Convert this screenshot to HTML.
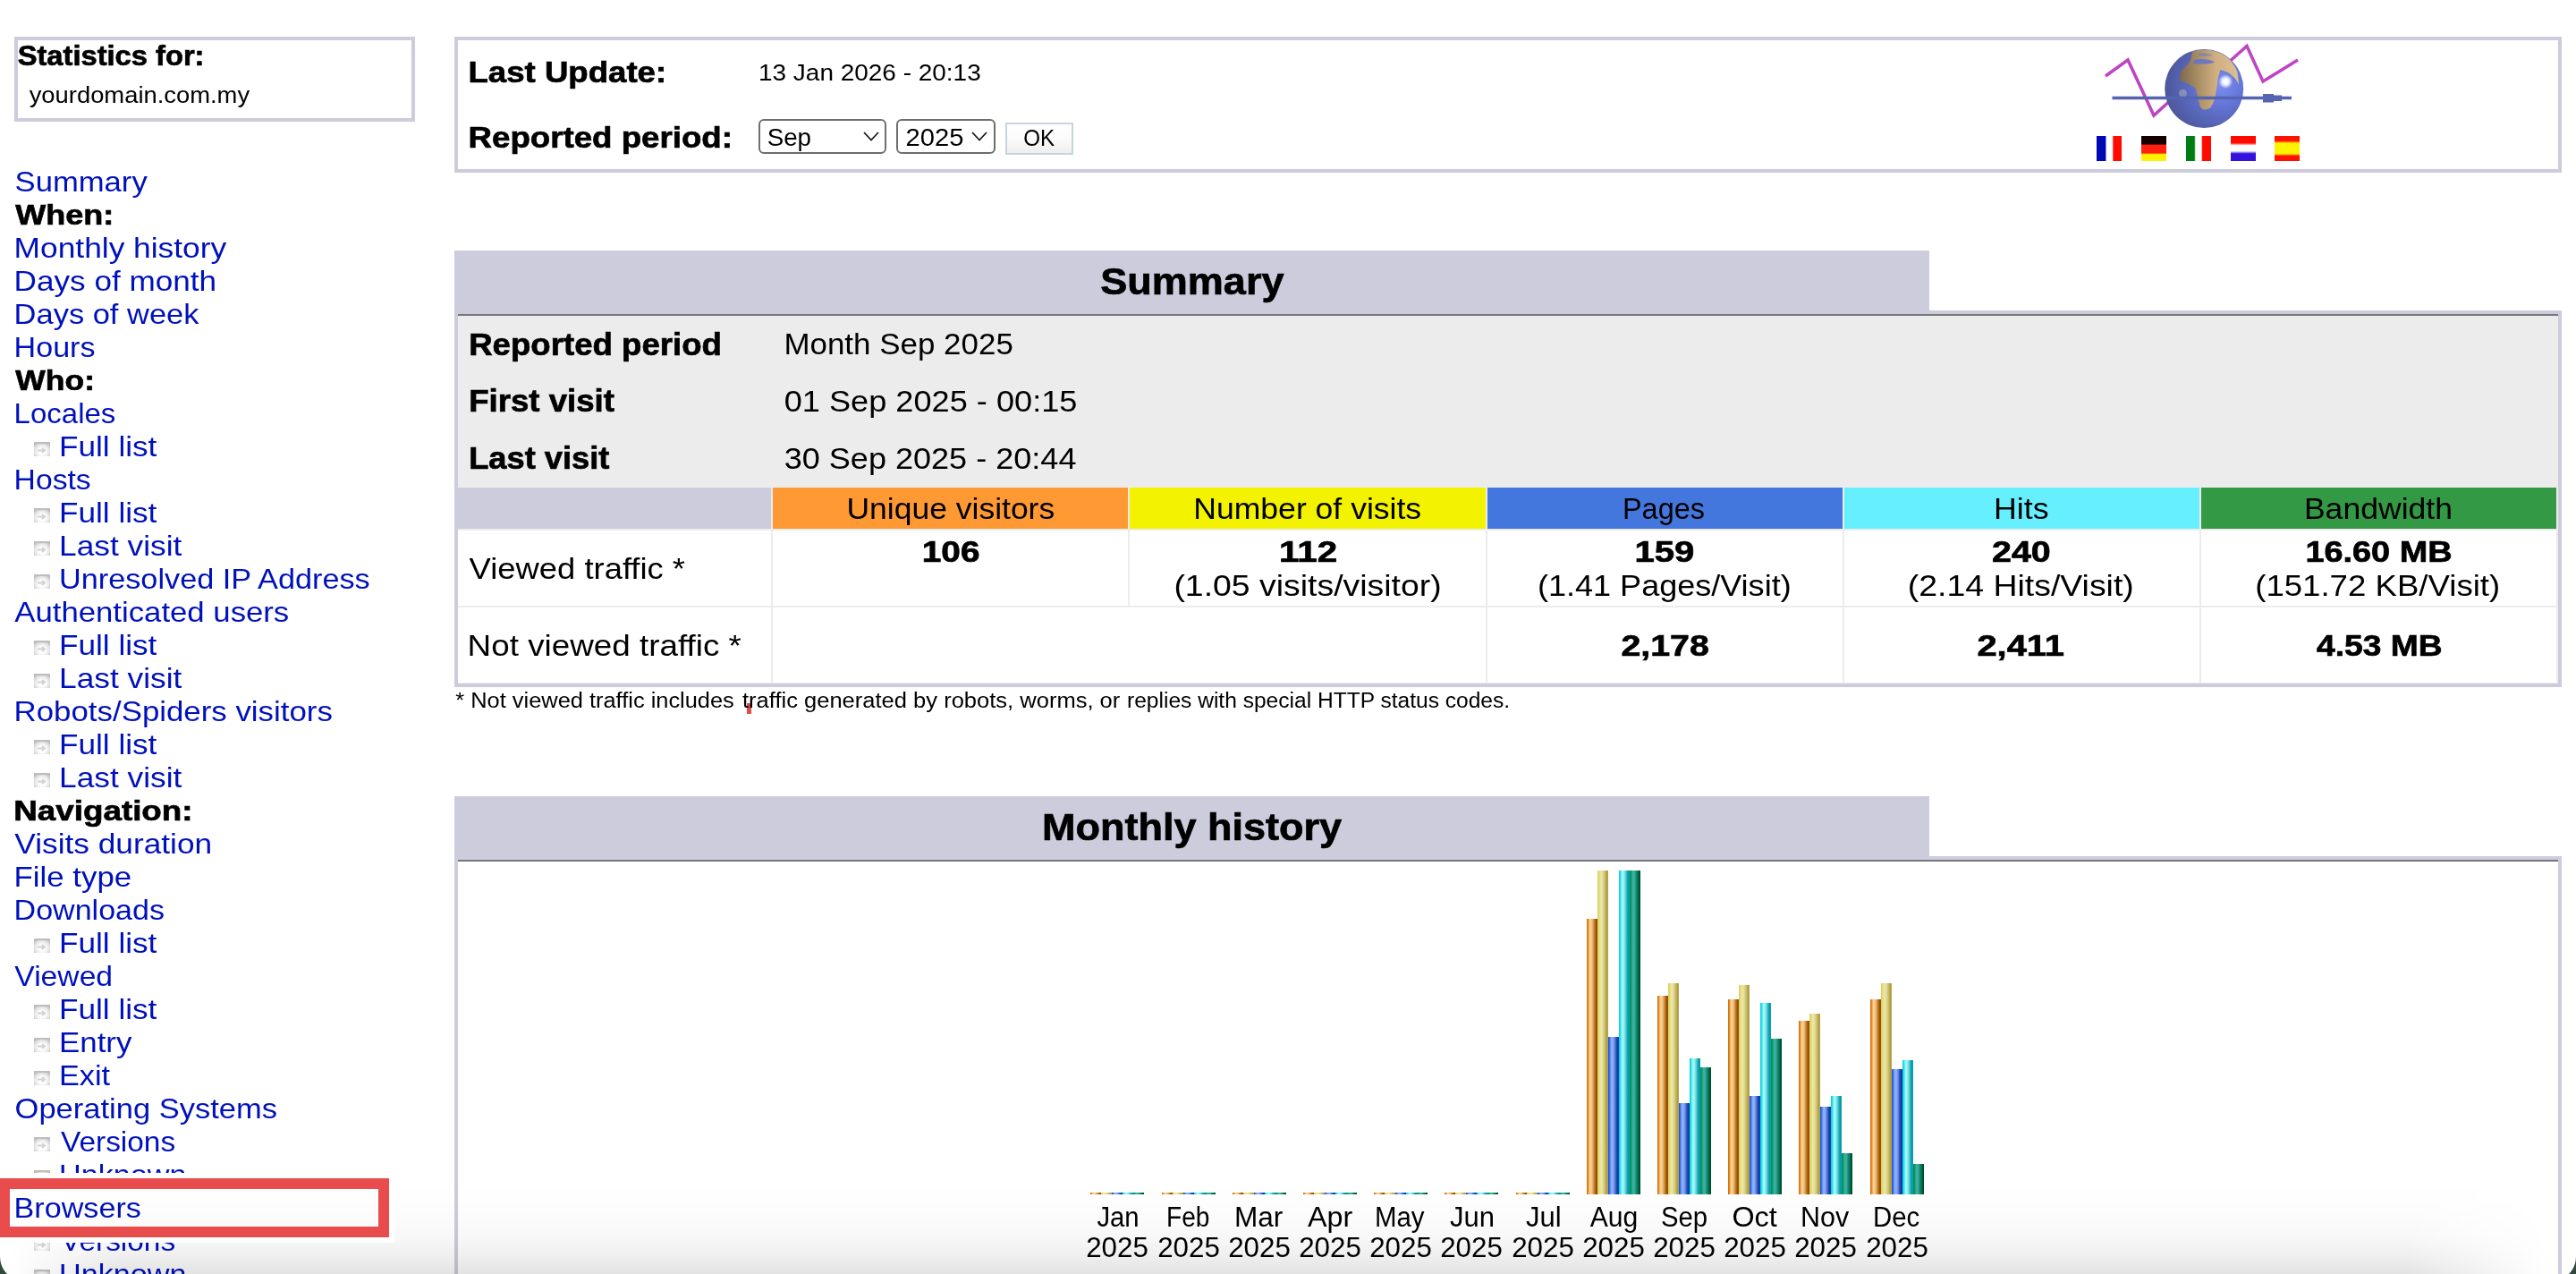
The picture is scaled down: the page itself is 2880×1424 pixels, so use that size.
<!DOCTYPE html>
<html><head><meta charset="utf-8"><title>Statistics for yourdomain.com.my</title>
<style>
html,body{margin:0;padding:0;}
body{width:2880px;height:1424px;overflow:hidden;position:relative;background:#fff;font-family:"Liberation Sans",sans-serif;}
div{box-sizing:border-box;}
.bar{position:absolute;width:12px;}
.hu{background:linear-gradient(90deg,#c86600 0%,#e99a3a 16%,#ffcb88 26%,#f6d095 40%,#dfa862 58%,#b66e14 76%,#9a5000 88%,#9a5000 100%);}
.vv{background:linear-gradient(90deg,#d6ce5c 0%,#e2dc80 16%,#eee6a0 30%,#e8e0a0 44%,#d6d088 58%,#c2b452 76%,#b09a48 88%,#c4aa50 100%);}
.vp{background:linear-gradient(90deg,#0a48d8 0%,#4a80ec 16%,#88b0fc 30%,#90aef4 44%,#6484dc 60%,#2c4cc0 76%,#0840a4 88%,#0a44a0 100%);}
.vh{background:linear-gradient(90deg,#0cc6d2 0%,#3ce4ec 16%,#90fcfc 28%,#a4f4f4 42%,#66d4dc 60%,#20aab8 76%,#0898a4 88%,#0aa8b4 100%);}
.vk{background:linear-gradient(90deg,#008650 0%,#10a070 16%,#34b4a2 30%,#40a898 46%,#14867a 62%,#007a50 76%,#005634 88%,#004c2c 100%);}
</style></head><body>

<div style="position:absolute;left:16px;top:41px;width:448px;height:95px;background:#fff;border:4px solid #ccccdd"></div>
<div style="position:absolute;left:508px;top:41px;width:2356px;height:152px;background:#fff;border:4px solid #ccccdd"></div>
<div style="position:absolute;left:848px;top:133px;width:143px;height:39px;background:#fff;border:2px solid #6e6e6e;border-radius:6px"></div>
<div style="position:absolute;left:1002px;top:133px;width:111px;height:39px;background:#fff;border:2px solid #6e6e6e;border-radius:6px"></div>
<div style="position:absolute;left:1124px;top:137px;width:76px;height:36px;background:linear-gradient(#ffffff,#fbfbfb 50%,#eeeeee);border:2px solid #c6d4e0"></div>
<div style="position:absolute;left:508px;top:280px;width:1649px;height:71px;background:#ccccdd;"></div>
<div style="position:absolute;left:2157px;top:347px;width:707px;height:4px;background:#ccccdd;"></div>
<div style="position:absolute;left:508px;top:351px;width:2356px;height:417px;background:#ccccdd;"></div>
<div style="position:absolute;left:512px;top:351px;width:2348px;height:2px;background:#777777;"></div>
<div style="position:absolute;left:512px;top:353px;width:2348px;height:192px;background:#ececec;"></div>
<div style="position:absolute;left:512px;top:545px;width:2348px;height:48px;background:#ececec;"></div>
<div style="position:absolute;left:512px;top:545px;width:350px;height:46px;background:#ccccdd;"></div>
<div style="position:absolute;left:864px;top:545px;width:397px;height:46px;background:#ff9933;"></div>
<div style="position:absolute;left:1263px;top:545px;width:398px;height:46px;background:#f3f300;"></div>
<div style="position:absolute;left:1663px;top:545px;width:397px;height:46px;background:#4477dd;"></div>
<div style="position:absolute;left:2062px;top:545px;width:397px;height:46px;background:#66f0ff;"></div>
<div style="position:absolute;left:2461px;top:545px;width:397px;height:46px;background:#339944;"></div>
<div style="position:absolute;left:512px;top:593px;width:2348px;height:171px;background:#ececec;"></div>
<div style="position:absolute;left:512px;top:593px;width:350px;height:84px;background:#fff;"></div>
<div style="position:absolute;left:864px;top:593px;width:397px;height:84px;background:#fff;"></div>
<div style="position:absolute;left:1263px;top:593px;width:398px;height:84px;background:#fff;"></div>
<div style="position:absolute;left:1663px;top:593px;width:397px;height:84px;background:#fff;"></div>
<div style="position:absolute;left:2062px;top:593px;width:397px;height:84px;background:#fff;"></div>
<div style="position:absolute;left:2461px;top:593px;width:397px;height:84px;background:#fff;"></div>
<div style="position:absolute;left:512px;top:679px;width:350px;height:84px;background:#fff;"></div>
<div style="position:absolute;left:864px;top:679px;width:797px;height:84px;background:#fff;"></div>
<div style="position:absolute;left:1663px;top:679px;width:397px;height:84px;background:#fff;"></div>
<div style="position:absolute;left:2062px;top:679px;width:397px;height:84px;background:#fff;"></div>
<div style="position:absolute;left:2461px;top:679px;width:397px;height:84px;background:#fff;"></div>
<div style="position:absolute;left:835px;top:786px;width:5px;height:12px;background:#e84a4c;"></div>
<div style="position:absolute;left:508px;top:890px;width:1649px;height:71px;background:#ccccdd;"></div>
<div style="position:absolute;left:2157px;top:957px;width:707px;height:4px;background:#ccccdd;"></div>
<div style="position:absolute;left:508px;top:961px;width:2356px;height:479px;background:#ccccdd;"></div>
<div style="position:absolute;left:512px;top:961px;width:2348px;height:2px;background:#777777;"></div>
<div style="position:absolute;left:512px;top:963px;width:2348px;height:477px;background:#fff;"></div>
<div class="bar hu" style="left:1219px;top:1333px;height:2px"></div>
<div class="bar vv" style="left:1231px;top:1333px;height:2px"></div>
<div class="bar vp" style="left:1243px;top:1333px;height:2px"></div>
<div class="bar vh" style="left:1255px;top:1333px;height:2px"></div>
<div class="bar vk" style="left:1267px;top:1333px;height:2px"></div>
<div class="bar hu" style="left:1299px;top:1333px;height:2px"></div>
<div class="bar vv" style="left:1311px;top:1333px;height:2px"></div>
<div class="bar vp" style="left:1323px;top:1333px;height:2px"></div>
<div class="bar vh" style="left:1335px;top:1333px;height:2px"></div>
<div class="bar vk" style="left:1347px;top:1333px;height:2px"></div>
<div class="bar hu" style="left:1378px;top:1333px;height:2px"></div>
<div class="bar vv" style="left:1390px;top:1333px;height:2px"></div>
<div class="bar vp" style="left:1402px;top:1333px;height:2px"></div>
<div class="bar vh" style="left:1414px;top:1333px;height:2px"></div>
<div class="bar vk" style="left:1426px;top:1333px;height:2px"></div>
<div class="bar hu" style="left:1457px;top:1333px;height:2px"></div>
<div class="bar vv" style="left:1469px;top:1333px;height:2px"></div>
<div class="bar vp" style="left:1481px;top:1333px;height:2px"></div>
<div class="bar vh" style="left:1493px;top:1333px;height:2px"></div>
<div class="bar vk" style="left:1505px;top:1333px;height:2px"></div>
<div class="bar hu" style="left:1536px;top:1333px;height:2px"></div>
<div class="bar vv" style="left:1548px;top:1333px;height:2px"></div>
<div class="bar vp" style="left:1560px;top:1333px;height:2px"></div>
<div class="bar vh" style="left:1572px;top:1333px;height:2px"></div>
<div class="bar vk" style="left:1584px;top:1333px;height:2px"></div>
<div class="bar hu" style="left:1615px;top:1333px;height:2px"></div>
<div class="bar vv" style="left:1627px;top:1333px;height:2px"></div>
<div class="bar vp" style="left:1639px;top:1333px;height:2px"></div>
<div class="bar vh" style="left:1651px;top:1333px;height:2px"></div>
<div class="bar vk" style="left:1663px;top:1333px;height:2px"></div>
<div class="bar hu" style="left:1695px;top:1333px;height:2px"></div>
<div class="bar vv" style="left:1707px;top:1333px;height:2px"></div>
<div class="bar vp" style="left:1719px;top:1333px;height:2px"></div>
<div class="bar vh" style="left:1731px;top:1333px;height:2px"></div>
<div class="bar vk" style="left:1743px;top:1333px;height:2px"></div>
<div class="bar hu" style="left:1774px;top:1027px;height:308px"></div>
<div class="bar vv" style="left:1786px;top:973px;height:362px"></div>
<div class="bar vp" style="left:1798px;top:1159px;height:176px"></div>
<div class="bar vh" style="left:1810px;top:973px;height:362px"></div>
<div class="bar vk" style="left:1822px;top:973px;height:362px"></div>
<div class="bar hu" style="left:1853px;top:1113px;height:222px"></div>
<div class="bar vv" style="left:1865px;top:1099px;height:236px"></div>
<div class="bar vp" style="left:1877px;top:1233px;height:102px"></div>
<div class="bar vh" style="left:1889px;top:1183px;height:152px"></div>
<div class="bar vk" style="left:1901px;top:1193px;height:142px"></div>
<div class="bar hu" style="left:1932px;top:1117px;height:218px"></div>
<div class="bar vv" style="left:1944px;top:1101px;height:234px"></div>
<div class="bar vp" style="left:1956px;top:1225px;height:110px"></div>
<div class="bar vh" style="left:1968px;top:1121px;height:214px"></div>
<div class="bar vk" style="left:1980px;top:1161px;height:174px"></div>
<div class="bar hu" style="left:2011px;top:1141px;height:194px"></div>
<div class="bar vv" style="left:2023px;top:1133px;height:202px"></div>
<div class="bar vp" style="left:2035px;top:1237px;height:98px"></div>
<div class="bar vh" style="left:2047px;top:1225px;height:110px"></div>
<div class="bar vk" style="left:2059px;top:1289px;height:46px"></div>
<div class="bar hu" style="left:2091px;top:1117px;height:218px"></div>
<div class="bar vv" style="left:2103px;top:1099px;height:236px"></div>
<div class="bar vp" style="left:2115px;top:1195px;height:140px"></div>
<div class="bar vh" style="left:2127px;top:1185px;height:150px"></div>
<div class="bar vk" style="left:2139px;top:1301px;height:34px"></div>
<div style="position:absolute;left:38px;top:494px;width:18px;height:16px;background:radial-gradient(ellipse at 50% 60%,#ffffff 30%,#e4e4e4 65%,#b0b0b0 100%);border-top:2px solid #bdbdbd"><svg width="18" height="14" style="position:absolute;left:0;top:0"><path d="M4,7.5 H10 M9,5 L12,7.5 L9,10" fill="none" stroke="#d2d2d2" stroke-width="2"/></svg></div>
<div style="position:absolute;left:38px;top:568px;width:18px;height:16px;background:radial-gradient(ellipse at 50% 60%,#ffffff 30%,#e4e4e4 65%,#b0b0b0 100%);border-top:2px solid #bdbdbd"><svg width="18" height="14" style="position:absolute;left:0;top:0"><path d="M4,7.5 H10 M9,5 L12,7.5 L9,10" fill="none" stroke="#d2d2d2" stroke-width="2"/></svg></div>
<div style="position:absolute;left:38px;top:605px;width:18px;height:16px;background:radial-gradient(ellipse at 50% 60%,#ffffff 30%,#e4e4e4 65%,#b0b0b0 100%);border-top:2px solid #bdbdbd"><svg width="18" height="14" style="position:absolute;left:0;top:0"><path d="M4,7.5 H10 M9,5 L12,7.5 L9,10" fill="none" stroke="#d2d2d2" stroke-width="2"/></svg></div>
<div style="position:absolute;left:38px;top:642px;width:18px;height:16px;background:radial-gradient(ellipse at 50% 60%,#ffffff 30%,#e4e4e4 65%,#b0b0b0 100%);border-top:2px solid #bdbdbd"><svg width="18" height="14" style="position:absolute;left:0;top:0"><path d="M4,7.5 H10 M9,5 L12,7.5 L9,10" fill="none" stroke="#d2d2d2" stroke-width="2"/></svg></div>
<div style="position:absolute;left:38px;top:716px;width:18px;height:16px;background:radial-gradient(ellipse at 50% 60%,#ffffff 30%,#e4e4e4 65%,#b0b0b0 100%);border-top:2px solid #bdbdbd"><svg width="18" height="14" style="position:absolute;left:0;top:0"><path d="M4,7.5 H10 M9,5 L12,7.5 L9,10" fill="none" stroke="#d2d2d2" stroke-width="2"/></svg></div>
<div style="position:absolute;left:38px;top:753px;width:18px;height:16px;background:radial-gradient(ellipse at 50% 60%,#ffffff 30%,#e4e4e4 65%,#b0b0b0 100%);border-top:2px solid #bdbdbd"><svg width="18" height="14" style="position:absolute;left:0;top:0"><path d="M4,7.5 H10 M9,5 L12,7.5 L9,10" fill="none" stroke="#d2d2d2" stroke-width="2"/></svg></div>
<div style="position:absolute;left:38px;top:827px;width:18px;height:16px;background:radial-gradient(ellipse at 50% 60%,#ffffff 30%,#e4e4e4 65%,#b0b0b0 100%);border-top:2px solid #bdbdbd"><svg width="18" height="14" style="position:absolute;left:0;top:0"><path d="M4,7.5 H10 M9,5 L12,7.5 L9,10" fill="none" stroke="#d2d2d2" stroke-width="2"/></svg></div>
<div style="position:absolute;left:38px;top:864px;width:18px;height:16px;background:radial-gradient(ellipse at 50% 60%,#ffffff 30%,#e4e4e4 65%,#b0b0b0 100%);border-top:2px solid #bdbdbd"><svg width="18" height="14" style="position:absolute;left:0;top:0"><path d="M4,7.5 H10 M9,5 L12,7.5 L9,10" fill="none" stroke="#d2d2d2" stroke-width="2"/></svg></div>
<div style="position:absolute;left:38px;top:1049px;width:18px;height:16px;background:radial-gradient(ellipse at 50% 60%,#ffffff 30%,#e4e4e4 65%,#b0b0b0 100%);border-top:2px solid #bdbdbd"><svg width="18" height="14" style="position:absolute;left:0;top:0"><path d="M4,7.5 H10 M9,5 L12,7.5 L9,10" fill="none" stroke="#d2d2d2" stroke-width="2"/></svg></div>
<div style="position:absolute;left:38px;top:1123px;width:18px;height:16px;background:radial-gradient(ellipse at 50% 60%,#ffffff 30%,#e4e4e4 65%,#b0b0b0 100%);border-top:2px solid #bdbdbd"><svg width="18" height="14" style="position:absolute;left:0;top:0"><path d="M4,7.5 H10 M9,5 L12,7.5 L9,10" fill="none" stroke="#d2d2d2" stroke-width="2"/></svg></div>
<div style="position:absolute;left:38px;top:1160px;width:18px;height:16px;background:radial-gradient(ellipse at 50% 60%,#ffffff 30%,#e4e4e4 65%,#b0b0b0 100%);border-top:2px solid #bdbdbd"><svg width="18" height="14" style="position:absolute;left:0;top:0"><path d="M4,7.5 H10 M9,5 L12,7.5 L9,10" fill="none" stroke="#d2d2d2" stroke-width="2"/></svg></div>
<div style="position:absolute;left:38px;top:1197px;width:18px;height:16px;background:radial-gradient(ellipse at 50% 60%,#ffffff 30%,#e4e4e4 65%,#b0b0b0 100%);border-top:2px solid #bdbdbd"><svg width="18" height="14" style="position:absolute;left:0;top:0"><path d="M4,7.5 H10 M9,5 L12,7.5 L9,10" fill="none" stroke="#d2d2d2" stroke-width="2"/></svg></div>
<div style="position:absolute;left:38px;top:1271px;width:18px;height:16px;background:radial-gradient(ellipse at 50% 60%,#ffffff 30%,#e4e4e4 65%,#b0b0b0 100%);border-top:2px solid #bdbdbd"><svg width="18" height="14" style="position:absolute;left:0;top:0"><path d="M4,7.5 H10 M9,5 L12,7.5 L9,10" fill="none" stroke="#d2d2d2" stroke-width="2"/></svg></div>
<div style="position:absolute;left:38px;top:1308px;width:18px;height:16px;background:radial-gradient(ellipse at 50% 60%,#ffffff 30%,#e4e4e4 65%,#b0b0b0 100%);border-top:2px solid #bdbdbd"><svg width="18" height="14" style="position:absolute;left:0;top:0"><path d="M4,7.5 H10 M9,5 L12,7.5 L9,10" fill="none" stroke="#d2d2d2" stroke-width="2"/></svg></div>
<div style="position:absolute;left:38px;top:1382px;width:18px;height:16px;background:radial-gradient(ellipse at 50% 60%,#ffffff 30%,#e4e4e4 65%,#b0b0b0 100%);border-top:2px solid #bdbdbd"><svg width="18" height="14" style="position:absolute;left:0;top:0"><path d="M4,7.5 H10 M9,5 L12,7.5 L9,10" fill="none" stroke="#d2d2d2" stroke-width="2"/></svg></div>
<div style="position:absolute;left:38px;top:1419px;width:18px;height:16px;background:radial-gradient(ellipse at 50% 60%,#ffffff 30%,#e4e4e4 65%,#b0b0b0 100%);border-top:2px solid #bdbdbd"><svg width="18" height="14" style="position:absolute;left:0;top:0"><path d="M4,7.5 H10 M9,5 L12,7.5 L9,10" fill="none" stroke="#d2d2d2" stroke-width="2"/></svg></div>
<div style="position:absolute;left:2344px;top:152px;width:28px;height:28px;background:linear-gradient(90deg,#0008b4 0,#0008b4 9.6px,#ffffff 11.2px,#ffffff 17.4px,#ff0a00 19px,#ff0a00 28px)"></div><div style="position:absolute;left:2394px;top:152px;width:28px;height:28px;background:linear-gradient(180deg,#140000 0,#140000 8.8px,#ff2010 10.4px,#ff2010 19px,#fff200 20.6px,#fff200 28px)"></div><div style="position:absolute;left:2444px;top:152px;width:28px;height:28px;background:linear-gradient(90deg,#007c10 0,#007c10 9.2px,#ffffff 10.8px,#ffffff 17px,#ff0a00 18.6px,#ff0a00 28px)"></div><div style="position:absolute;left:2494px;top:152px;width:28px;height:28px;background:linear-gradient(180deg,#ff0a00 0,#ff0a00 7.8px,#ffffff 10.6px,#ffffff 16.8px,#3610dc 19.8px,#3610dc 28px)"></div><div style="position:absolute;left:2543px;top:152px;width:28px;height:28px;background:linear-gradient(180deg,#ff1000 0,#ff1000 5.4px,#fff200 8px,#fff200 19.8px,#ff1000 22.4px,#ff1000 28px)"></div>
<svg width="2880" height="1424" style="position:absolute;left:0;top:0;will-change:transform;font-family:'Liberation Sans',sans-serif"><text x="19.70" y="73.20" font-size="31" font-weight="bold" fill="#000" stroke="#000" stroke-width="0.7" textLength="208.81" lengthAdjust="spacingAndGlyphs">Statistics for:</text><text x="32.70" y="114.50" font-size="25" font-weight="normal" fill="#000" textLength="246.38" lengthAdjust="spacingAndGlyphs">yourdomain.com.my</text><text x="523.50" y="92.10" font-size="34" font-weight="bold" fill="#000" stroke="#000" stroke-width="0.7" textLength="221.62" lengthAdjust="spacingAndGlyphs">Last Update:</text><text x="848.00" y="89.90" font-size="26" font-weight="normal" fill="#000" textLength="248.70" lengthAdjust="spacingAndGlyphs">13 Jan 2026 - 20:13</text><text x="523.50" y="164.90" font-size="34" font-weight="bold" fill="#000" stroke="#000" stroke-width="0.7" textLength="295.51" lengthAdjust="spacingAndGlyphs">Reported period:</text><text x="857.70" y="162.70" font-size="27" font-weight="normal" fill="#000" textLength="49.35" lengthAdjust="spacingAndGlyphs">Sep</text><text x="1012.50" y="162.70" font-size="27" font-weight="normal" fill="#000" textLength="64.88" lengthAdjust="spacingAndGlyphs">2025</text><text x="1144.20" y="162.70" font-size="25" font-weight="normal" fill="#000" textLength="34.92" lengthAdjust="spacingAndGlyphs">OK</text><text x="1230.20" y="329.10" font-size="42" font-weight="bold" fill="#000" stroke="#000" stroke-width="0.7" textLength="205.32" lengthAdjust="spacingAndGlyphs">Summary</text><text x="1165.00" y="939.10" font-size="42" font-weight="bold" fill="#000" stroke="#000" stroke-width="0.7" textLength="335.17" lengthAdjust="spacingAndGlyphs">Monthly history</text><text x="524.20" y="396.50" font-size="35" font-weight="bold" fill="#000" stroke="#000" stroke-width="0.7" textLength="282.70" lengthAdjust="spacingAndGlyphs">Reported period</text><text x="524.20" y="460.30" font-size="35" font-weight="bold" fill="#000" stroke="#000" stroke-width="0.7" textLength="162.71" lengthAdjust="spacingAndGlyphs">First visit</text><text x="524.20" y="524.20" font-size="35" font-weight="bold" fill="#000" stroke="#000" stroke-width="0.7" textLength="157.23" lengthAdjust="spacingAndGlyphs">Last visit</text><text x="876.40" y="396.00" font-size="34" font-weight="normal" fill="#000" textLength="256.43" lengthAdjust="spacingAndGlyphs">Month Sep 2025</text><text x="876.70" y="460.00" font-size="34" font-weight="normal" fill="#000" textLength="327.76" lengthAdjust="spacingAndGlyphs">01 Sep 2025 - 00:15</text><text x="876.70" y="524.20" font-size="34" font-weight="normal" fill="#000" textLength="326.76" lengthAdjust="spacingAndGlyphs">30 Sep 2025 - 20:44</text><text x="946.50" y="580.20" font-size="34" font-weight="normal" fill="#000" textLength="232.68" lengthAdjust="spacingAndGlyphs">Unique visitors</text><text x="1334.30" y="579.90" font-size="34" font-weight="normal" fill="#000" textLength="254.83" lengthAdjust="spacingAndGlyphs">Number of visits</text><text x="1814.00" y="580.00" font-size="34" font-weight="normal" fill="#000" textLength="91.91" lengthAdjust="spacingAndGlyphs">Pages</text><text x="2229.00" y="580.00" font-size="34" font-weight="normal" fill="#000" textLength="61.56" lengthAdjust="spacingAndGlyphs">Hits</text><text x="2575.90" y="580.00" font-size="34" font-weight="normal" fill="#000" textLength="166.08" lengthAdjust="spacingAndGlyphs">Bandwidth</text><text x="524.60" y="647.00" font-size="34" font-weight="normal" fill="#000" textLength="241.45" lengthAdjust="spacingAndGlyphs">Viewed traffic *</text><text x="1030.80" y="628.20" font-size="34" font-weight="bold" fill="#000" stroke="#000" stroke-width="0.7" textLength="64.73" lengthAdjust="spacingAndGlyphs">106</text><text x="1430.10" y="628.20" font-size="34" font-weight="bold" fill="#000" stroke="#000" stroke-width="0.7" textLength="64.96" lengthAdjust="spacingAndGlyphs">112</text><text x="1312.40" y="666.10" font-size="34" font-weight="normal" fill="#000" textLength="299.26" lengthAdjust="spacingAndGlyphs">(1.05 visits/visitor)</text><text x="1827.50" y="628.20" font-size="34" font-weight="bold" fill="#000" stroke="#000" stroke-width="0.7" textLength="66.93" lengthAdjust="spacingAndGlyphs">159</text><text x="1719.00" y="666.10" font-size="34" font-weight="normal" fill="#000" textLength="283.63" lengthAdjust="spacingAndGlyphs">(1.41 Pages/Visit)</text><text x="2227.00" y="628.20" font-size="34" font-weight="bold" fill="#000" stroke="#000" stroke-width="0.7" textLength="65.73" lengthAdjust="spacingAndGlyphs">240</text><text x="2132.80" y="666.10" font-size="34" font-weight="normal" fill="#000" textLength="252.99" lengthAdjust="spacingAndGlyphs">(2.14 Hits/Visit)</text><text x="2577.40" y="628.20" font-size="34" font-weight="bold" fill="#000" stroke="#000" stroke-width="0.7" textLength="164.21" lengthAdjust="spacingAndGlyphs">16.60 MB</text><text x="2521.20" y="666.10" font-size="34" font-weight="normal" fill="#000" textLength="274.02" lengthAdjust="spacingAndGlyphs">(151.72 KB/Visit)</text><text x="522.60" y="732.70" font-size="34" font-weight="normal" fill="#000" textLength="306.33" lengthAdjust="spacingAndGlyphs">Not viewed traffic *</text><text x="1812.40" y="733.40" font-size="34" font-weight="bold" fill="#000" stroke="#000" stroke-width="0.7" textLength="98.49" lengthAdjust="spacingAndGlyphs">2,178</text><text x="2210.40" y="733.40" font-size="34" font-weight="bold" fill="#000" stroke="#000" stroke-width="0.7" textLength="97.62" lengthAdjust="spacingAndGlyphs">2,411</text><text x="2590.00" y="733.40" font-size="34" font-weight="bold" fill="#000" stroke="#000" stroke-width="0.7" textLength="140.50" lengthAdjust="spacingAndGlyphs">4.53 MB</text><text x="509.30" y="791.00" font-size="23.5" font-weight="normal" fill="#000" textLength="311.53" lengthAdjust="spacingAndGlyphs">* Not viewed traffic includes</text><text x="830.00" y="791.00" font-size="23.5" font-weight="normal" fill="#000" textLength="422.30" lengthAdjust="spacingAndGlyphs">traffic generated by robots, worms, or</text><text x="1260.00" y="791.00" font-size="23.5" font-weight="normal" fill="#000" textLength="428.09" lengthAdjust="spacingAndGlyphs">replies with special HTTP status codes.</text><text x="1226.40" y="1370.90" font-size="31" font-weight="normal" fill="#000" textLength="47.18" lengthAdjust="spacingAndGlyphs">Jan</text><text x="1214.15" y="1405.00" font-size="31" font-weight="normal" fill="#000" textLength="69.67" lengthAdjust="spacingAndGlyphs">2025</text><text x="1304.00" y="1370.90" font-size="31" font-weight="normal" fill="#000" textLength="48.42" lengthAdjust="spacingAndGlyphs">Feb</text><text x="1294.15" y="1405.00" font-size="31" font-weight="normal" fill="#000" textLength="69.67" lengthAdjust="spacingAndGlyphs">2025</text><text x="1380.00" y="1370.90" font-size="31" font-weight="normal" fill="#000" textLength="54.39" lengthAdjust="spacingAndGlyphs">Mar</text><text x="1373.15" y="1405.00" font-size="31" font-weight="normal" fill="#000" textLength="69.67" lengthAdjust="spacingAndGlyphs">2025</text><text x="1462.00" y="1370.90" font-size="31" font-weight="normal" fill="#000" textLength="50.25" lengthAdjust="spacingAndGlyphs">Apr</text><text x="1452.15" y="1405.00" font-size="31" font-weight="normal" fill="#000" textLength="69.67" lengthAdjust="spacingAndGlyphs">2025</text><text x="1537.00" y="1370.90" font-size="31" font-weight="normal" fill="#000" textLength="55.58" lengthAdjust="spacingAndGlyphs">May</text><text x="1531.15" y="1405.00" font-size="31" font-weight="normal" fill="#000" textLength="69.67" lengthAdjust="spacingAndGlyphs">2025</text><text x="1621.00" y="1370.90" font-size="31" font-weight="normal" fill="#000" textLength="49.98" lengthAdjust="spacingAndGlyphs">Jun</text><text x="1610.15" y="1405.00" font-size="31" font-weight="normal" fill="#000" textLength="69.67" lengthAdjust="spacingAndGlyphs">2025</text><text x="1706.00" y="1370.90" font-size="31" font-weight="normal" fill="#000" textLength="39.64" lengthAdjust="spacingAndGlyphs">Jul</text><text x="1690.15" y="1405.00" font-size="31" font-weight="normal" fill="#000" textLength="69.67" lengthAdjust="spacingAndGlyphs">2025</text><text x="1777.80" y="1370.90" font-size="31" font-weight="normal" fill="#000" textLength="53.57" lengthAdjust="spacingAndGlyphs">Aug</text><text x="1769.15" y="1405.00" font-size="31" font-weight="normal" fill="#000" textLength="69.67" lengthAdjust="spacingAndGlyphs">2025</text><text x="1857.00" y="1370.90" font-size="31" font-weight="normal" fill="#000" textLength="52.17" lengthAdjust="spacingAndGlyphs">Sep</text><text x="1848.15" y="1405.00" font-size="31" font-weight="normal" fill="#000" textLength="69.67" lengthAdjust="spacingAndGlyphs">2025</text><text x="1936.50" y="1370.90" font-size="31" font-weight="normal" fill="#000" textLength="50.23" lengthAdjust="spacingAndGlyphs">Oct</text><text x="1927.15" y="1405.00" font-size="31" font-weight="normal" fill="#000" textLength="69.67" lengthAdjust="spacingAndGlyphs">2025</text><text x="2013.00" y="1370.90" font-size="31" font-weight="normal" fill="#000" textLength="54.14" lengthAdjust="spacingAndGlyphs">Nov</text><text x="2006.15" y="1405.00" font-size="31" font-weight="normal" fill="#000" textLength="69.67" lengthAdjust="spacingAndGlyphs">2025</text><text x="2094.00" y="1370.90" font-size="31" font-weight="normal" fill="#000" textLength="52.14" lengthAdjust="spacingAndGlyphs">Dec</text><text x="2086.15" y="1405.00" font-size="31" font-weight="normal" fill="#000" textLength="69.67" lengthAdjust="spacingAndGlyphs">2025</text><text x="16.60" y="213.80" font-size="32" font-weight="normal" fill="#0011bb" textLength="148.11" lengthAdjust="spacingAndGlyphs">Summary</text><text x="17.30" y="250.80" font-size="32" font-weight="bold" fill="#000" stroke="#000" stroke-width="0.7" textLength="109.95" lengthAdjust="spacingAndGlyphs">When:</text><text x="15.60" y="287.80" font-size="32" font-weight="normal" fill="#0011bb" textLength="237.59" lengthAdjust="spacingAndGlyphs">Monthly history</text><text x="15.60" y="324.80" font-size="32" font-weight="normal" fill="#0011bb" textLength="226.51" lengthAdjust="spacingAndGlyphs">Days of month</text><text x="15.60" y="361.80" font-size="32" font-weight="normal" fill="#0011bb" textLength="206.88" lengthAdjust="spacingAndGlyphs">Days of week</text><text x="15.60" y="398.80" font-size="32" font-weight="normal" fill="#0011bb" textLength="90.86" lengthAdjust="spacingAndGlyphs">Hours</text><text x="17.30" y="435.80" font-size="32" font-weight="bold" fill="#000" stroke="#000" stroke-width="0.7" textLength="88.65" lengthAdjust="spacingAndGlyphs">Who:</text><text x="15.60" y="472.80" font-size="32" font-weight="normal" fill="#0011bb" textLength="113.70" lengthAdjust="spacingAndGlyphs">Locales</text><text x="66.00" y="509.80" font-size="32" font-weight="normal" fill="#0011bb" textLength="109.36" lengthAdjust="spacingAndGlyphs">Full list</text><text x="15.60" y="546.80" font-size="32" font-weight="normal" fill="#0011bb" textLength="86.10" lengthAdjust="spacingAndGlyphs">Hosts</text><text x="66.00" y="583.80" font-size="32" font-weight="normal" fill="#0011bb" textLength="109.36" lengthAdjust="spacingAndGlyphs">Full list</text><text x="66.00" y="620.80" font-size="32" font-weight="normal" fill="#0011bb" textLength="137.28" lengthAdjust="spacingAndGlyphs">Last visit</text><text x="66.00" y="657.80" font-size="32" font-weight="normal" fill="#0011bb" textLength="347.72" lengthAdjust="spacingAndGlyphs">Unresolved IP Address</text><text x="16.30" y="694.80" font-size="32" font-weight="normal" fill="#0011bb" textLength="306.94" lengthAdjust="spacingAndGlyphs">Authenticated users</text><text x="66.00" y="731.80" font-size="32" font-weight="normal" fill="#0011bb" textLength="109.36" lengthAdjust="spacingAndGlyphs">Full list</text><text x="66.00" y="768.80" font-size="32" font-weight="normal" fill="#0011bb" textLength="137.28" lengthAdjust="spacingAndGlyphs">Last visit</text><text x="15.60" y="805.80" font-size="32" font-weight="normal" fill="#0011bb" textLength="356.23" lengthAdjust="spacingAndGlyphs">Robots/Spiders visitors</text><text x="66.00" y="842.80" font-size="32" font-weight="normal" fill="#0011bb" textLength="109.36" lengthAdjust="spacingAndGlyphs">Full list</text><text x="66.00" y="879.80" font-size="32" font-weight="normal" fill="#0011bb" textLength="137.28" lengthAdjust="spacingAndGlyphs">Last visit</text><text x="15.30" y="916.80" font-size="32" font-weight="bold" fill="#000" stroke="#000" stroke-width="0.7" textLength="200.23" lengthAdjust="spacingAndGlyphs">Navigation:</text><text x="16.30" y="953.80" font-size="32" font-weight="normal" fill="#0011bb" textLength="220.81" lengthAdjust="spacingAndGlyphs">Visits duration</text><text x="15.60" y="990.80" font-size="32" font-weight="normal" fill="#0011bb" textLength="131.54" lengthAdjust="spacingAndGlyphs">File type</text><text x="15.60" y="1027.80" font-size="32" font-weight="normal" fill="#0011bb" textLength="168.31" lengthAdjust="spacingAndGlyphs">Downloads</text><text x="66.00" y="1064.80" font-size="32" font-weight="normal" fill="#0011bb" textLength="109.36" lengthAdjust="spacingAndGlyphs">Full list</text><text x="16.30" y="1101.80" font-size="32" font-weight="normal" fill="#0011bb" textLength="109.78" lengthAdjust="spacingAndGlyphs">Viewed</text><text x="66.00" y="1138.80" font-size="32" font-weight="normal" fill="#0011bb" textLength="109.36" lengthAdjust="spacingAndGlyphs">Full list</text><text x="66.00" y="1175.80" font-size="32" font-weight="normal" fill="#0011bb" textLength="81.39" lengthAdjust="spacingAndGlyphs">Entry</text><text x="66.00" y="1212.80" font-size="32" font-weight="normal" fill="#0011bb" textLength="57.14" lengthAdjust="spacingAndGlyphs">Exit</text><text x="16.60" y="1249.80" font-size="32" font-weight="normal" fill="#0011bb" textLength="293.31" lengthAdjust="spacingAndGlyphs">Operating Systems</text><text x="68.00" y="1286.80" font-size="32" font-weight="normal" fill="#0011bb" textLength="128.13" lengthAdjust="spacingAndGlyphs">Versions</text><text x="66.00" y="1323.80" font-size="32" font-weight="normal" fill="#0011bb" textLength="142.41" lengthAdjust="spacingAndGlyphs">Unknown</text><text x="15.60" y="1360.80" font-size="32" font-weight="normal" fill="#0011bb" textLength="142.26" lengthAdjust="spacingAndGlyphs">Browsers</text><text x="68.00" y="1397.80" font-size="32" font-weight="normal" fill="#0011bb" textLength="128.13" lengthAdjust="spacingAndGlyphs">Versions</text><text x="66.00" y="1434.80" font-size="32" font-weight="normal" fill="#0011bb" textLength="142.41" lengthAdjust="spacingAndGlyphs">Unknown</text><polyline points="966,148 974,156.5 982,148" fill="none" stroke="#1a1a1a" stroke-width="1.8"/><polyline points="1087,148 1095,156.5 1103,148" fill="none" stroke="#1a1a1a" stroke-width="1.8"/><defs>
<radialGradient id="gl" cx="0.72" cy="0.45" r="0.8">
<stop offset="0" stop-color="#7c8ef0"/><stop offset="0.35" stop-color="#6274d4"/><stop offset="0.75" stop-color="#525ea8"/><stop offset="1" stop-color="#4a5290"/>
</radialGradient>
<clipPath id="gclip"><circle cx="2464.2" cy="99" r="43.5"/></clipPath>
<linearGradient id="land" x1="0" y1="0" x2="1" y2="0">
<stop offset="0" stop-color="#7e6a4c"/><stop offset="0.3" stop-color="#a88c64"/><stop offset="0.6" stop-color="#cfae80"/><stop offset="1" stop-color="#dcc092"/>
</linearGradient>
<radialGradient id="hl" cx="0.5" cy="0.5" r="0.5">
<stop offset="0" stop-color="#ffffff"/><stop offset="0.45" stop-color="#ffffff" stop-opacity="0.9"/><stop offset="1" stop-color="#ffffff" stop-opacity="0"/>
</radialGradient>
</defs><polyline points="2354,85 2379,67 2408,129 2440,100" fill="none" stroke="#bf44c4" stroke-width="3.6"/><polyline points="2480,80 2512,51.5 2530,91 2569,67" fill="none" stroke="#bf44c4" stroke-width="3.6"/><circle cx="2464.2" cy="99" r="44" fill="url(#gl)"/><path d="M2452.8,55.7 L2471.8,55.7 C2482,58 2490,62 2492.4,65.6 C2497,72 2500,76 2501.5,80.4 L2503.1,94.4 L2499,87.8 C2495,84 2492,81 2490,80.4 L2482.5,78 L2480,86.2 C2479,92 2479,95 2478.4,98.6 C2477,104 2477,108 2476,110.9 C2474,116 2472,119 2471,120.8 C2468,122 2465,123 2462.7,122.5 C2460,120 2459,118 2458.6,115 C2457,108 2455,102 2454.5,98.6 C2450,95 2447,94 2444.6,92.8 C2440,91 2438,90 2437.2,88.7 C2437,84 2438,81 2438.8,79.6 C2441,76 2444,74 2446.3,72.2 C2448,69 2449,67 2449.6,65.6 C2450,61 2451,58 2452.8,55.7 Z" fill="url(#land)" clip-path="url(#gclip)"/><path d="M2453,67 C2460,65 2470,66 2476,69 C2472,72 2462,72 2452,71 Z" fill="#6272d0" opacity="0.85"/><path d="M2458,60 C2464,59 2470,60 2474,62 C2468,63 2462,63 2458,62 Z" fill="#6878d4" opacity="0.6"/><circle cx="2440.5" cy="104.3" r="4.5" fill="#9a9cb8" opacity="0.7"/><circle cx="2488.3" cy="91.1" r="8" fill="url(#hl)"/><line x1="2361.5" y1="109.5" x2="2562" y2="109.5" stroke="#5464b0" stroke-width="3.6"/><rect x="2530" y="105" width="12" height="9.5" fill="#5464b0"/><rect x="2541" y="106.5" width="10" height="6.5" fill="#5464b0"/></svg>
<div style="position:absolute;left:0;top:1320px;width:2880px;height:104px;background:linear-gradient(180deg,rgba(0,0,0,0) 0%,rgba(0,0,0,0.008) 29%,rgba(0,0,0,0.027) 60%,rgba(0,0,0,0.067) 82%,rgba(0,0,0,0.11) 100%);-webkit-mask-image:linear-gradient(90deg,transparent 12px,#000 130px,#000 2690px,transparent 2850px);mask-image:linear-gradient(90deg,transparent 12px,#000 130px,#000 2690px,transparent 2850px)"></div>
<div style="position:absolute;left:0px;top:1311px;width:441px;height:78px;background:transparent;border:6px solid #fff;border-left:0"></div>
<div style="position:absolute;left:0px;top:1317px;width:435px;height:66px;background:transparent;border:12px solid #e84c4c;border-left-width:11px"></div>
<div style="position:absolute;left:0;top:1405px;width:27px;height:19px;background:radial-gradient(circle 26.6px at 26.6px 0px,rgba(0,0,0,0) 26px,#2e4a3b 27px)"></div>
<div style="position:absolute;left:2853px;top:1405px;width:27px;height:19px;background:radial-gradient(circle 26.6px at 0.4px 0px,rgba(0,0,0,0) 26px,#2e4a3b 27px)"></div>
</body></html>
